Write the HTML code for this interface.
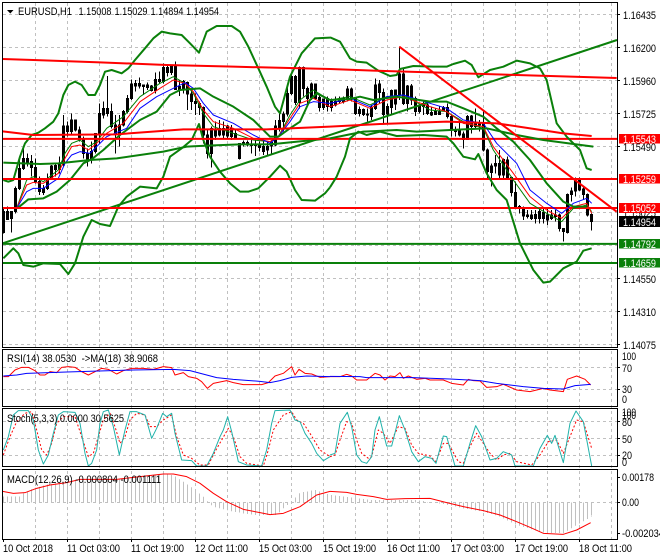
<!DOCTYPE html>
<html><head><meta charset="utf-8"><style>
html,body{margin:0;padding:0;background:#fff}
svg{display:block}
text{font-family:"Liberation Sans",sans-serif;font-size:11px;fill:#000}
.w{fill:#fff}
</style></head><body>
<svg width="660" height="560" viewBox="0 0 660 560" xmlns="http://www.w3.org/2000/svg">
<defs>
<pattern id="h" patternUnits="userSpaceOnUse" width="12" height="3"><rect x="9" y="0" width="3" height="3" fill="#c0c0c0"/></pattern>
</defs>
<rect width="660" height="560" fill="#fff"/>
<!-- grid -->
<g stroke="#c0c0c0" stroke-width="1" stroke-dasharray="3 3" fill="none" shape-rendering="crispEdges">
<path d="M35.5 3V539M67.5 3V539M99.5 3V539M131.5 3V539M163.5 3V539M195.5 3V539M227.5 3V539M259.5 3V539M291.5 3V539M323.5 3V539M355.5 3V539M387.5 3V539M419.5 3V539M451.5 3V539M483.5 3V539M515.5 3V539M547.5 3V539M579.5 3V539M611.5 3V539"/>
<path d="M3 14.5H617M3 47.5H617M3 80.5H617M3 113.5H617M3 146.5H617M3 179.5H617M3 212.5H617M3 245.5H617M3 278.5H617M3 311.5H617M3 344.5H617"/>
<path d="M3 367.5H617M3 389.5H617M3 421.5H617M3 438.5H617M3 455.5H617M3 502.5H617"/>
</g>
<!-- bid line -->
<path d="M3 221.5H617" stroke="#c0c0c0" fill="none" shape-rendering="crispEdges"/>
<!-- candles -->
<g transform="scale(.33333)" stroke="#000" stroke-width="3" shape-rendering="crispEdges">
<path fill="#0a6a0a" d="M10.5 622V700M7.5 635h6V697h-6zM34.5 635V697M31.5 635h6V655h-6zM46.5 560V640M43.5 565h6V635h-6zM58.5 475V570M55.5 505h6V565h-6zM70.5 445V510M67.5 475h6V505h-6zM82.5 460V500M79.5 475h6V490h-6zM130.5 555V585M127.5 565h6V578h-6zM142.5 520V570M139.5 535h6V565h-6zM154.5 495V540M151.5 498h6V535h-6zM166.5 490V530M163.5 497h6V508h-6zM178.5 470V520M175.5 493h6V508h-6zM190.5 345V500M187.5 378h6V495h-6zM214.5 340V405M211.5 360h6V395h-6zM274.5 425V490M271.5 455h6V480h-6zM286.5 400V460M283.5 400h6V455h-6zM298.5 310V430M295.5 340h6V400h-6zM310.5 305V355M307.5 325h6V345h-6zM346.5 345V460M343.5 375h6V400h-6zM370.5 330V380M367.5 335h6V375h-6zM382.5 285V340M379.5 295h6V335h-6zM394.5 238V300M391.5 252h6V295h-6zM418.5 232V265M415.5 250h6V258h-6zM442.5 248V270M439.5 255h6V262h-6zM466.5 218V280M463.5 238h6V272h-6zM490.5 190V250M487.5 203h6V245h-6zM502.5 195V230M499.5 203h6V218h-6zM514.5 195V225M511.5 200h6V218h-6zM538.5 240V288M535.5 260h6V268h-6zM550.5 240V280M547.5 245h6V265h-6zM586.5 280V345M583.5 305h6V310h-6zM634.5 380V503M631.5 385h6V460h-6zM646.5 365V420M643.5 390h6V408h-6zM658.5 360V410M655.5 385h6V405h-6zM670.5 365V415M667.5 385h6V405h-6zM706.5 390V418M703.5 400h6V412h-6zM718.5 430V478M715.5 430h6V475h-6zM730.5 422V440M727.5 427h6V433h-6zM742.5 422V440M739.5 427h6V435h-6zM754.5 420V460M751.5 433h6V437h-6zM766.5 420V468M763.5 433h6V437h-6zM778.5 425V455M775.5 433h6V442h-6zM790.5 425V465M787.5 440h6V455h-6zM802.5 425V465M799.5 440h6V450h-6zM814.5 420V465M811.5 428h6V438h-6zM826.5 360V438M823.5 378h6V435h-6zM838.5 335V395M835.5 362h6V382h-6zM850.5 335V395M847.5 342h6V365h-6zM862.5 255V350M859.5 280h6V342h-6zM874.5 225V285M871.5 230h6V280h-6zM898.5 200V325M895.5 203h6V308h-6zM922.5 260V320M919.5 265h6V295h-6zM934.5 248V300M931.5 252h6V292h-6zM970.5 295V330M967.5 297h6V322h-6zM1006.5 290V320M1003.5 305h6V315h-6zM1018.5 290V310M1015.5 300h6V305h-6zM1042.5 258V305M1039.5 267h6V298h-6zM1078.5 320V350M1075.5 328h6V340h-6zM1102.5 325V365M1099.5 342h6V345h-6zM1114.5 315V360M1111.5 323h6V350h-6zM1126.5 235V330M1123.5 255h6V325h-6zM1162.5 310V370M1159.5 320h6V342h-6zM1174.5 268V345M1171.5 272h6V322h-6zM1198.5 140V300M1195.5 222h6V285h-6zM1222.5 255V335M1219.5 258h6V310h-6zM1258.5 310V340M1255.5 318h6V335h-6zM1270.5 300V345M1267.5 310h6V320h-6zM1294.5 320V348M1291.5 338h6V345h-6zM1306.5 325V345M1303.5 335h6V343h-6zM1318.5 320V345M1315.5 333h6V343h-6zM1330.5 318V335M1327.5 322h6V332h-6zM1366.5 380V410M1363.5 390h6V395h-6zM1378.5 360V410M1375.5 392h6V405h-6zM1402.5 345V420M1399.5 350h6V418h-6zM1426.5 325V385M1423.5 370h6V380h-6zM1438.5 360V395M1435.5 368h6V375h-6zM1474.5 490V560M1471.5 498h6V518h-6zM1486.5 465V520M1483.5 490h6V498h-6zM1510.5 475V540M1507.5 478h6V525h-6zM1558.5 615V640M1555.5 620h6V625h-6zM1582.5 630V655M1579.5 645h6V650h-6zM1606.5 630V670M1603.5 643h6V655h-6zM1630.5 625V670M1627.5 638h6V655h-6zM1654.5 630V660M1651.5 645h6V655h-6zM1666.5 630V665M1663.5 645h6V650h-6zM1702.5 580V700M1699.5 583h6V698h-6zM1714.5 562V605M1711.5 573h6V583h-6zM1726.5 532V590M1723.5 535h6V573h-6z"/>
<path fill="#e02020" d="M22.5 620V660M19.5 635h6V658h-6zM94.5 465V530M91.5 485h6V503h-6zM106.5 475V550M103.5 503h6V545h-6zM118.5 530V585M115.5 545h6V575h-6zM202.5 365V410M199.5 378h6V395h-6zM226.5 360V395M223.5 360h6V390h-6zM238.5 380V425M235.5 390h6V418h-6zM250.5 410V475M247.5 418h6V460h-6zM262.5 445V500M259.5 460h6V480h-6zM322.5 228V350M319.5 325h6V340h-6zM334.5 310V385M331.5 335h6V380h-6zM358.5 345V440M355.5 375h6V400h-6zM406.5 240V275M403.5 250h6V258h-6zM430.5 255V285M427.5 255h6V260h-6zM454.5 255V275M451.5 258h6V272h-6zM478.5 215V250M475.5 238h6V245h-6zM526.5 185V270M523.5 200h6V268h-6zM562.5 245V330M559.5 248h6V282h-6zM574.5 265V330M571.5 282h6V305h-6zM598.5 305V345M595.5 310h6V322h-6zM610.5 320V430M607.5 322h6V405h-6zM622.5 385V475M619.5 405h6V460h-6zM682.5 375V415M679.5 378h6V408h-6zM694.5 375V420M691.5 385h6V410h-6zM886.5 225V315M883.5 230h6V308h-6zM910.5 200V290M907.5 203h6V265h-6zM946.5 250V300M943.5 252h6V295h-6zM958.5 285V335M955.5 293h6V322h-6zM982.5 290V335M979.5 295h6V320h-6zM994.5 295V335M991.5 305h6V322h-6zM1030.5 290V310M1027.5 295h6V305h-6zM1054.5 262V305M1051.5 267h6V297h-6zM1066.5 292V345M1063.5 295h6V340h-6zM1090.5 325V348M1087.5 328h6V343h-6zM1138.5 240V310M1135.5 252h6V278h-6zM1150.5 265V370M1147.5 278h6V343h-6zM1186.5 268V330M1183.5 270h6V312h-6zM1210.5 205V315M1207.5 222h6V310h-6zM1234.5 252V315M1231.5 258h6V300h-6zM1246.5 290V348M1243.5 295h6V335h-6zM1282.5 305V345M1279.5 315h6V340h-6zM1342.5 310V355M1339.5 322h6V350h-6zM1354.5 345V410M1351.5 350h6V390h-6zM1390.5 395V445M1387.5 402h6V418h-6zM1414.5 345V400M1411.5 348h6V380h-6zM1450.5 335V455M1447.5 368h6V450h-6zM1462.5 445V540M1459.5 450h6V515h-6zM1498.5 450V540M1495.5 490h6V525h-6zM1522.5 470V540M1519.5 480h6V532h-6zM1534.5 530V590M1531.5 532h6V578h-6zM1546.5 545V625M1543.5 578h6V622h-6zM1570.5 620V660M1567.5 622h6V648h-6zM1594.5 630V660M1591.5 645h6V655h-6zM1618.5 625V670M1615.5 635h6V655h-6zM1642.5 625V675M1639.5 645h6V660h-6zM1678.5 640V695M1675.5 645h6V685h-6zM1690.5 685V725M1687.5 685h6V695h-6zM1738.5 533V573M1735.5 538h6V570h-6zM1750.5 560V600M1747.5 567h6V583h-6zM1762.5 580V650M1759.5 583h6V645h-6zM1774.5 640V692M1771.5 643h6V665h-6z"/>
</g>
<!-- indicators left half -->
<g transform="scale(.33333)" fill="none" stroke-linejoin="round">
<polyline stroke="#008000" stroke-width="3" points="50,625 80,540 100,530 130,545 175,510 195,460 215,430 240,420 265,440 290,425 320,385 370,350 420,290 480,250 520,230 555,250 580,280 610,340 640,380 700,400 760,420 810,425 835,410 870,345 900,300 940,270 990,300"/>
<polyline stroke="#ff0000" stroke-width="3" points="50,625 80,555 100,547 130,550 175,520 195,475 215,440 240,435 265,450 290,430 320,400 370,370 420,305 480,265 520,240 555,250 580,275 610,330 640,365 700,385 760,415 810,425 835,410 870,355 900,310 940,295 990,320"/>
<polyline stroke="#0000ff" stroke-width="3" points="50,625 80,575 100,565 130,565 175,535 195,490 215,465 240,455 270,460 290,440 320,410 380,385 420,325 470,290 520,265 555,248 580,265 610,310 640,345 700,370 760,405 810,430 835,410 870,365 900,320 940,305 990,310"/>
<g stroke="#0a800a" stroke-width="6">
<polyline points="10,540 25,545 40,540 50,505 60,470 75,430 95,405 115,398 135,385 160,365 175,340 190,285 205,255 225,245 245,255 265,285 285,285 300,255 315,215 335,210 365,220 385,205 405,180 435,145 460,115 485,95 510,100 545,105 570,130 597,158 620,95 650,78 695,78 720,95 745,140 775,205 800,260 825,320 840,340 870,230 905,160 945,115 990,113"/>
<polyline points="52,625 85,598 130,595 170,575 210,540 250,490 275,478 310,450 360,405 420,360 470,335 510,285 540,270 600,265 640,290 700,320 760,360 810,410 835,410 870,385 900,365 930,300 950,280 990,300"/>
<polyline points="10,488 120,492 175,490 270,480 350,475 490,455 560,440 620,437 720,433 810,433 990,415"/>
<polyline points="10,775 40,745 55,760 70,795 100,800 130,790 180,792 205,822 225,790 250,710 275,660 300,672 330,678 355,620 380,590 420,560 470,565 490,530 510,470 545,445 575,420 597,372 610,420 630,470 660,515 690,550 720,575 745,575 775,565 810,530 840,497 860,515 885,570 905,600 945,602 975,580 990,562"/>
<path d="M8 730L1851 120"/>
<path d="M8 731.5H1851M8 789H1851" stroke-width="6"/>
</g>
<g stroke="#ff0000" stroke-width="6">
<polyline points="8,177 100,180 300,187 500,195 700,200 990,207"/>
<polyline points="8,394 100,405 350,403 550,388 800,388 990,380"/>
<path d="M8 416.5H1851M8 537H1851M8 624H1851"/>
</g>
</g>
<!-- indicators right half -->
<g transform="translate(330,0) scale(.33333)" fill="none" stroke-linejoin="round">
<polyline stroke="#008000" stroke-width="3" points="0,300 60,290 120,315 170,290 220,285 300,330 350,335 400,365 460,385 490,450 550,540 600,610 650,640 695,665 730,625 770,615 785,635"/>
<polyline stroke="#ff0000" stroke-width="3" points="0,320 60,300 120,325 170,300 220,290 300,320 350,335 400,370 460,380 490,440 550,520 600,590 650,630 695,655 730,620 770,610 785,640"/>
<polyline stroke="#0000ff" stroke-width="3" points="0,310 60,295 120,320 170,290 220,285 300,310 350,325 400,360 460,370 500,430 560,490 600,570 650,610 695,640 730,610 770,595 785,610"/>
<g stroke="#0a800a" stroke-width="6">
<polyline points="0,112 30,125 60,175 80,185 110,188 145,212 180,228 200,225 210,207 250,198 310,200 350,200 370,192 405,182 425,195 445,232 480,210 520,200 560,182 600,190 630,205 650,240 680,370 710,410 750,450 770,505 785,510"/>
<polyline points="0,300 60,297 90,290 130,300 200,290 300,305 350,305 400,325 460,350 500,385 550,425 600,480 650,550 700,605 730,620 770,620"/>
<polyline points="0,415 100,395 200,390 260,395 400,388 470,385 560,405 640,420 790,440"/>
<polyline points="0,562 20,530 45,470 60,415 85,395 110,405 150,395 200,408 280,405 350,410 370,430 400,470 435,478 445,462 470,520 500,570 530,600 570,730 610,810 640,848 660,845 680,825 700,805 740,785 760,752 785,745"/>
</g>
<g stroke="#ff0000" stroke-width="6">
<polyline points="0,207 130,212 400,220 660,228 860,234"/>
<polyline points="0,380 150,372 350,365 500,370 700,400 785,408"/>
<path d="M208 140L860 635"/>
</g>
</g>
<!-- MACD hist -->
<g transform="translate(0,280) scale(.33333)" shape-rendering="crispEdges">
<polygon fill="url(#h)" points="8,667 8,650 60,650 70,640 100,625 150,612 200,605 300,598 400,595 490,582 520,585 550,605 580,625 610,650 625,667 640,680 700,695 760,705 830,705 850,685 875,665 900,638 945,630 990,645 1120,660 1250,660 1290,667 1330,672 1390,685 1450,695 1500,710 1550,735 1630,758 1690,760 1730,735 1775,710 1778,667"/>
</g>
<!-- sub-windows lines left -->
<g transform="translate(0,280) scale(.33333)" fill="none" stroke-width="3" stroke-linejoin="round">
<polyline stroke="#ff0000" points="10,290 25,290 45,270 65,262 85,262 105,272 120,285 135,285 150,275 170,278 185,262 205,260 225,262 245,275 265,285 285,275 305,265 325,268 350,282 370,272 395,265 430,265 460,268 490,260 515,263 525,285 550,278 565,290 590,295 605,305 622,325 640,310 680,302 700,308 730,314 785,314 805,308 825,288 850,280 875,260 885,285 897,268 915,280 935,282 960,292 990,290"/>
<polyline stroke="#0000ff" points="10,288 50,285 80,280 200,276 400,270 520,268 570,272 650,293 700,298 780,304 810,308 840,302 875,292 920,288 990,290"/>
<polyline stroke="#ff0000" stroke-dasharray="6 6" points="10,525 30,470 50,425 75,400 95,395 110,450 125,510 140,525 155,490 170,430 190,410 225,410 245,470 265,530 280,520 295,470 310,420 330,400 345,440 360,490 375,470 390,420 410,400 435,405 450,440 470,440 490,420 515,405 530,470 550,525 575,535 600,555 625,555 645,515 665,480 685,445 700,470 720,530 740,550 790,558 805,510 820,450 850,405 875,395 890,420 910,430 930,460 960,510 990,530"/>
<polyline stroke="#20b2aa" points="10,510 25,470 40,405 55,392 85,392 100,420 115,510 130,552 145,525 160,460 175,405 190,395 225,397 240,430 255,520 265,558 275,550 290,510 300,430 310,395 325,390 340,440 358,525 375,450 390,395 410,395 435,405 455,475 470,445 488,400 500,410 515,400 525,460 545,540 575,542 590,558 620,558 640,520 660,470 670,450 683,410 695,455 715,545 740,555 785,558 800,510 815,430 825,392 870,390 885,420 900,425 915,460 935,490 950,520 970,542 990,530"/>
<polyline stroke="#ff0000" points="8,634 40,640 75,638 110,625 150,615 200,608 240,598 350,598 420,590 490,582 520,582 560,590 600,610 640,640 680,665 730,688 780,698 810,704 850,700 900,680 950,645 990,634"/>
</g>
<!-- sub-windows lines right -->
<g transform="translate(330,280) scale(.33333)" fill="none" stroke-width="3" stroke-linejoin="round">
<polyline stroke="#ff0000" points="0,290 30,290 50,283 65,288 80,300 110,300 135,280 150,285 165,300 180,288 195,290 210,278 220,295 235,288 260,298 285,295 300,300 340,300 365,310 400,315 415,298 430,302 450,303 470,322 500,320 520,313 560,330 600,335 640,325 660,330 700,335 712,298 740,288 765,298 782,315"/>
<polyline stroke="#0000ff" points="0,289 90,290 110,293 250,293 360,297 450,302 500,310 580,320 640,325 700,327 735,317 782,313"/>
<polyline stroke="#ff0000" stroke-dasharray="6 6" points="0,530 15,525 30,480 50,425 65,430 80,480 95,520 115,535 125,530 145,450 160,460 180,490 205,440 225,445 245,495 265,520 300,528 318,545 340,490 355,490 385,545 400,550 415,510 440,460 460,490 480,520 500,540 520,525 540,520 560,545 605,555 630,525 655,485 680,480 700,520 720,470 740,420 760,425 785,505"/>
<polyline stroke="#20b2aa" points="0,525 15,520 30,430 52,397 65,440 80,525 95,545 110,550 125,530 135,450 148,410 170,498 185,498 208,407 225,450 245,515 265,545 285,530 305,535 318,550 340,468 350,470 375,558 400,558 420,490 437,437 455,470 480,540 500,535 520,515 545,525 555,558 610,558 630,505 652,466 665,490 675,466 700,548 720,430 738,393 760,425 785,558"/>
<polyline stroke="#ff0000" points="0,634 50,637 80,643 130,650 170,658 225,656 300,655 350,668 400,680 460,692 510,705 560,725 600,742 640,760 700,763 740,750 782,728"/>
</g>
<!-- frames -->
<g fill="none" stroke="#000" shape-rendering="crispEdges">
<path d="M2.5 2.5H617.5V347.5H2.5ZM2.5 349.5H617.5V406.5H2.5ZM2.5 408.5H617.5V466.5H2.5ZM2.5 469.5H617.5V539.5H2.5Z"/>
<path d="M617 14.5h3M617 47.5h3M617 80.5h3M617 113.5h3M617 146.5h3M617 278.5h3M617 311.5h3M617 344.5h3M617 367.5h3M617 389.5h3M617 421.5h3M617 438.5h3M617 455.5h3M617 477.5h3M617 502.5h3M617 533.5h3M3.5 539v3M67.5 539v3M131.5 539v3M195.5 539v3M259.5 539v3M323.5 539v3M387.5 539v3M451.5 539v3M515.5 539v3M579.5 539v3"/>
</g>
<!-- header -->
<path d="M7 10h6.500l-3.200 3.500z" fill="#000"/>
<text x="18" y="15" textLength="54" lengthAdjust="spacingAndGlyphs">EURUSD,H1</text>
<text x="78.500" y="15" textLength="33" lengthAdjust="spacingAndGlyphs">1.15008</text>
<text x="114.500" y="15" textLength="33" lengthAdjust="spacingAndGlyphs">1.15029</text>
<text x="150.500" y="15" textLength="33" lengthAdjust="spacingAndGlyphs">1.14894</text>
<text x="186" y="15" textLength="33" lengthAdjust="spacingAndGlyphs">1.14954</text>
<text x="7" y="362" textLength="151" lengthAdjust="spacingAndGlyphs" xml:space="preserve">RSI(14) 38.0530  -&gt;MA(18) 38.9068</text>
<text x="7" y="422" textLength="117" lengthAdjust="spacingAndGlyphs">Stoch(5,3,3) 0.0000 30.5625</text>
<text x="7" y="483" textLength="154" lengthAdjust="spacingAndGlyphs">MACD(12,26,9) -0.000804 -0.001111</text>
<!-- price axis -->
<text x="623" y="19" textLength="33" lengthAdjust="spacingAndGlyphs">1.16435</text>
<text x="623" y="52" textLength="33" lengthAdjust="spacingAndGlyphs">1.16200</text>
<text x="623" y="85" textLength="33" lengthAdjust="spacingAndGlyphs">1.15960</text>
<text x="623" y="118" textLength="33" lengthAdjust="spacingAndGlyphs">1.15725</text>
<text x="623" y="151" textLength="33" lengthAdjust="spacingAndGlyphs">1.15490</text>
<text x="623" y="217" textLength="33" lengthAdjust="spacingAndGlyphs">1.15025</text>
<text x="623" y="283" textLength="33" lengthAdjust="spacingAndGlyphs">1.14550</text>
<text x="623" y="316" textLength="33" lengthAdjust="spacingAndGlyphs">1.14310</text>
<text x="623" y="349" textLength="33" lengthAdjust="spacingAndGlyphs">1.14075</text>
<rect x="619" y="134" width="41" height="9.500" fill="#ff0000"/><text class="w" x="623" y="143" textLength="33" lengthAdjust="spacingAndGlyphs">1.15543</text>
<rect x="619" y="174" width="41" height="9.500" fill="#ff0000"/><text class="w" x="623" y="183" textLength="33" lengthAdjust="spacingAndGlyphs">1.15259</text>
<rect x="619" y="203" width="41" height="10" fill="#ff0000"/><text class="w" x="623" y="212" textLength="33" lengthAdjust="spacingAndGlyphs">1.15052</text>
<rect x="619" y="216" width="41" height="11" fill="#000"/><text class="w" x="623" y="226" textLength="33" lengthAdjust="spacingAndGlyphs">1.14954</text>
<rect x="619" y="239" width="41" height="9.500" fill="#0a800a"/><text class="w" x="623" y="248" textLength="33" lengthAdjust="spacingAndGlyphs">1.14792</text>
<rect x="619" y="258" width="41" height="9.500" fill="#0a800a"/><text class="w" x="623" y="267" textLength="33" lengthAdjust="spacingAndGlyphs">1.14659</text>
<!-- sub axes -->
<text x="622" y="360" textLength="14" lengthAdjust="spacingAndGlyphs">100</text>
<text x="622" y="372" textLength="10" lengthAdjust="spacingAndGlyphs">70</text>
<text x="622" y="393" textLength="10" lengthAdjust="spacingAndGlyphs">30</text>
<text x="622" y="403" textLength="5" lengthAdjust="spacingAndGlyphs">0</text>
<text x="622" y="416" textLength="14" lengthAdjust="spacingAndGlyphs">100</text>
<text x="622" y="419" textLength="14" lengthAdjust="spacingAndGlyphs">100</text>
<text x="622" y="426" textLength="10" lengthAdjust="spacingAndGlyphs">80</text>
<text x="622" y="443" textLength="10" lengthAdjust="spacingAndGlyphs">50</text>
<text x="622" y="459" textLength="10" lengthAdjust="spacingAndGlyphs">20</text>
<text x="622" y="466" textLength="5" lengthAdjust="spacingAndGlyphs">0</text>
<text x="622" y="481" textLength="32" lengthAdjust="spacingAndGlyphs">0.00178</text>
<text x="622" y="506" textLength="17" lengthAdjust="spacingAndGlyphs">0.00</text>
<text x="622" y="537" textLength="42" lengthAdjust="spacingAndGlyphs">-0.002034</text>
<!-- time axis -->
<text x="3" y="552" textLength="50" lengthAdjust="spacingAndGlyphs">10 Oct 2018</text>
<text x="67" y="552" textLength="53" lengthAdjust="spacingAndGlyphs">11 Oct 03:00</text>
<text x="131" y="552" textLength="53" lengthAdjust="spacingAndGlyphs">11 Oct 19:00</text>
<text x="195" y="552" textLength="53" lengthAdjust="spacingAndGlyphs">12 Oct 11:00</text>
<text x="259" y="552" textLength="53" lengthAdjust="spacingAndGlyphs">15 Oct 03:00</text>
<text x="323" y="552" textLength="53" lengthAdjust="spacingAndGlyphs">15 Oct 19:00</text>
<text x="387" y="552" textLength="53" lengthAdjust="spacingAndGlyphs">16 Oct 11:00</text>
<text x="451" y="552" textLength="53" lengthAdjust="spacingAndGlyphs">17 Oct 03:00</text>
<text x="515" y="552" textLength="53" lengthAdjust="spacingAndGlyphs">17 Oct 19:00</text>
<text x="579" y="552" textLength="53" lengthAdjust="spacingAndGlyphs">18 Oct 11:00</text>
</svg>
</body></html>
